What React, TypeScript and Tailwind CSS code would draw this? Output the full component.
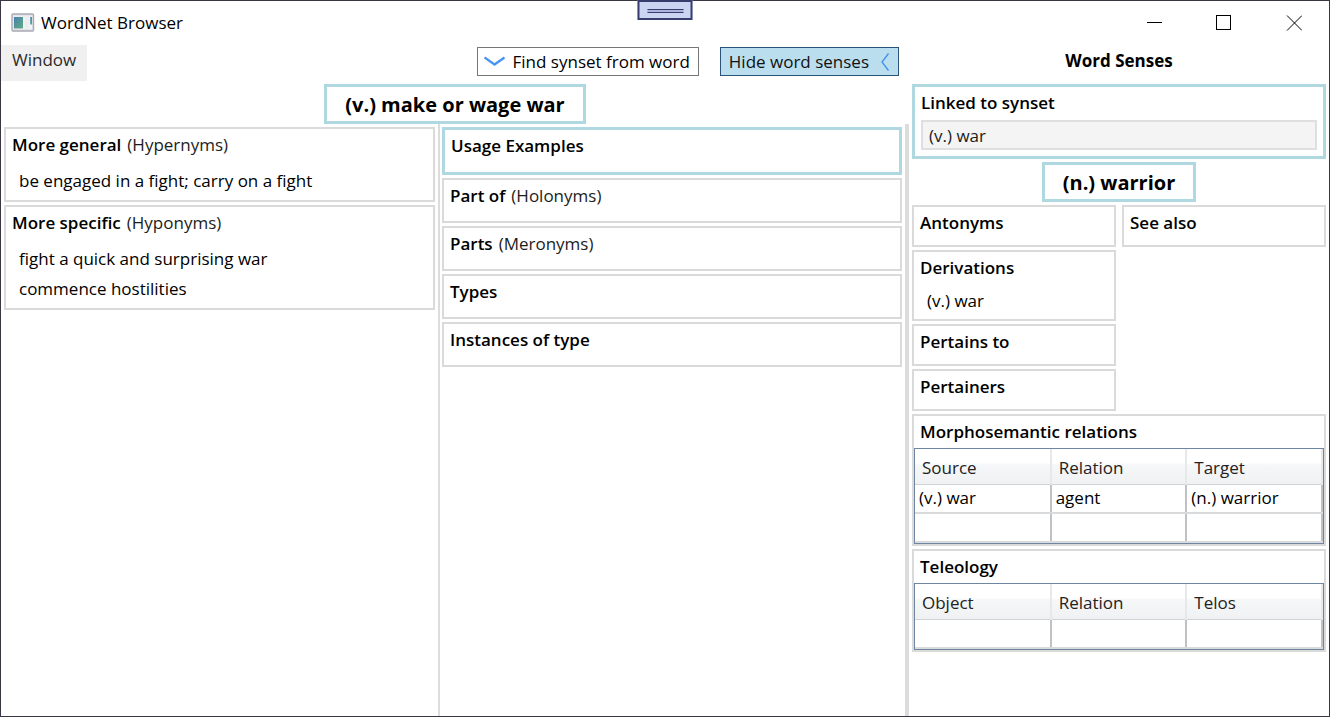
import type { ReactNode } from "react";

type CardProps = {
  title: string;
  note?: string;
  accent?: boolean;
  className?: string;
  children?: ReactNode;
};

function Card({ title, note, accent, className = "", children }: CardProps) {
  return (
    <section
      className={`${accent ? "border-3 border-[#b0d8e0]" : "border-2 border-[#dadada]"} ${className}`}
    >
      <h3 className="px-1.5 leading-8 font-semibold whitespace-nowrap">
        {title}
        {note && <span className="ml-1.5 font-normal text-[#1c1c1c]">({note})</span>}
      </h3>
      {children}
    </section>
  );
}

function Items({ items, className = "" }: { items: string[]; className?: string }) {
  return (
    <ul className={`px-[13px] leading-[30px] ${className}`}>
      {items.map((item) => (
        <li key={item}>{item}</li>
      ))}
    </ul>
  );
}

function Heading({ children }: { children: ReactNode }) {
  return (
    <h2 className="flex h-10 items-center self-center border-3 border-[#b0d8e0] px-[18px] pt-0.5 text-[20px] font-bold whitespace-nowrap">
      {children}
    </h2>
  );
}

function RelationTable({ label, columns, rows }: { label: string; columns: string[]; rows: string[][] }) {
  return (
    <div className="border border-[#6f86a3]">
      <table aria-label={label} className="w-full table-fixed border-collapse">
        <thead>
          <tr className="h-[35px] bg-linear-to-b from-white from-40% via-[#f6f7f8] via-45% to-[#f0f1f3]">
            {columns.map((column) => (
              <th
                key={column}
                className="border-r-2 border-b border-r-[#e6e8ea] border-b-[#d0d3d6] px-[7px] pt-1 text-left font-normal text-[#222]"
              >
                {column}
              </th>
            ))}
          </tr>
        </thead>
        <tbody>
          {rows.map((row, index) => (
            <tr key={index} className="h-[29px]">
              {row.map((cell, cellIndex) => (
                <td
                  key={cellIndex}
                  className="border-r-2 border-b-2 border-r-[#bfc2c4] border-b-[#d8dadb] px-1 leading-[26px]"
                >
                  {cell}
                </td>
              ))}
            </tr>
          ))}
        </tbody>
      </table>
    </div>
  );
}

function AppIcon() {
  return (
    <svg width="24" height="20" viewBox="0 0 24 20" aria-hidden="true">
      <defs>
        <linearGradient id="pane" x1="0" y1="0" x2="1" y2="1">
          <stop offset="0" stopColor="#4a80b0" />
          <stop offset="1" stopColor="#5fae80" />
        </linearGradient>
      </defs>
      <rect x="1" y="1" width="21.500" height="17" rx="1" fill="#e4e5ea" stroke="#a9abb2" strokeWidth="1.400" />
      <rect x="3" y="3.500" width="18" height="12.500" fill="#f3f4f7" />
      <rect x="3" y="4" width="9" height="11.500" fill="url(#pane)" />
      <rect x="13.500" y="4" width="4.500" height="11.500" fill="#ecedf1" />
      <rect x="19.200" y="4" width="1.800" height="7.500" fill="url(#pane)" />
    </svg>
  );
}

const windowButton = "flex h-11 w-[70px] items-center justify-center";

export default function App() {
  return (
    <div className="relative flex min-h-screen flex-col border border-[#3b3646] bg-white font-['Open_Sans','Noto_Sans',sans-serif] text-[17px] leading-6 text-black">
      <div className="absolute -top-px left-1/2 flex h-5 w-[55px] -translate-x-1/2 items-center justify-center border-2 border-[#373e6d] bg-[#cbd5f1] pt-0.5">
        <div className="h-1 w-9 border-y border-[#373e6d] bg-[#aab6dc]" />
      </div>

      <header className="flex h-11 items-center justify-between">
        <div className="flex items-center gap-1.5 pl-2.5">
          <AppIcon />
          <h1>WordNet Browser</h1>
        </div>
        <div className="flex">
          <button aria-label="Minimize" className={windowButton}>
            <svg width="16" height="16" viewBox="0 0 16 16" stroke="#000" fill="none">
              <path d="M1 7.500h15" />
            </svg>
          </button>
          <button aria-label="Maximize" className={windowButton}>
            <svg width="16" height="16" viewBox="0 0 16 16" stroke="#000" fill="none">
              <rect x="0.500" y="0.500" width="14" height="14" />
            </svg>
          </button>
          <button aria-label="Close" className={windowButton}>
            <svg width="16" height="16" viewBox="0 0 16 16" stroke="#000" fill="none">
              <path d="M1 0.500l15 15M16 0.500l-15 15" />
            </svg>
          </button>
        </div>
      </header>

      <div className="grid grow grid-cols-[908fr_420fr]">
        <main className="flex flex-col">
          <div className="flex h-[39px] items-start justify-between pr-[10px]">
            <nav>
              <button className="h-9 bg-[#f0f0f0] px-[11px] pb-1.5 text-[#2b2b2b]">Window</button>
            </nav>
            <div className="flex gap-[21px] pt-0.5">
              <button className="flex h-[29px] items-center gap-[7px] border border-[#767676] pr-2 pl-1.5 whitespace-nowrap">
                <svg className="shrink-0" width="22" height="12" viewBox="0 0 22 12" fill="none" stroke="#4a95f2" strokeWidth="2.400" aria-hidden="true">
                  <path d="M0.500 1.500l10 7 10-7" />
                </svg>
                Find synset from word
              </button>
              <button className="flex h-[29px] items-center gap-3 border border-[#2c5378] bg-[#bbdeee] px-2 whitespace-nowrap text-[#111]">
                Hide word senses
                <svg className="shrink-0" width="9" height="18" viewBox="0 0 9 18" fill="none" stroke="#4190f0" strokeWidth="1.300" aria-hidden="true">
                  <path d="M7.500 0.500L1 9l6.500 8.500" />
                </svg>
              </button>
            </div>
          </div>

          <Heading>(v.) make or wage war</Heading>

          <div className="grid grow grid-cols-[439fr_469fr]">
            <div className="flex flex-col gap-[3px] border-r-2 border-[#dcdcdc] px-[3px] pt-[3px]">
              <Card title="More general" note="Hypernyms">
                <Items items={["be engaged in a fight; carry on a fight"]} className="mt-[5px] pb-1" />
              </Card>
              <Card title="More specific" note="Hyponyms">
                <Items items={["fight a quick and surprising war", "commence hostilities"]} className="mt-[5px] pb-1" />
              </Card>
            </div>
            <div className="flex flex-col gap-[3px] border-r-4 border-[#dcdcdc] pt-[3px] pr-[3px] pl-0.5">
              <Card title="Usage Examples" accent className="min-h-12" />
              <Card title="Part of" note="Holonyms" className="min-h-[45px]" />
              <Card title="Parts" note="Meronyms" className="min-h-[45px]" />
              <Card title="Types" className="min-h-[45px]" />
              <Card title="Instances of type" className="min-h-[45px]" />
            </div>
          </div>
        </main>

        <aside className="flex flex-col gap-[3px] px-[3px]">
          <h2 className="h-9 text-center leading-8 font-bold">Word Senses</h2>
          <Card title="Linked to synset" accent className="h-[75px]">
            <input
              aria-label="Linked to synset"
              readOnly
              defaultValue="(v.) war"
              className="mx-1.5 mt-px block h-[30px] w-[calc(100%-12px)] border-2 border-[#dfdfdf] bg-[#f4f4f4] px-1.5 text-[#1c1c1c] outline-none"
            />
          </Card>
          <Heading>(n.) warrior</Heading>
          <div className="grid grid-cols-2 gap-x-1.5 gap-y-[3px]">
            <Card title="Antonyms" className="min-h-[42px]" />
            <Card title="See also" className="min-h-[42px]" />
            <Card title="Derivations" className="col-start-1">
              <Items items={["(v.) war"]} className="mt-0.5 pb-[3px]" />
            </Card>
            <Card title="Pertains to" className="col-start-1 min-h-[42px]" />
            <Card title="Pertainers" className="col-start-1 min-h-[42px]" />
          </div>
          <Card title="Morphosemantic relations">
            <RelationTable
              label="Morphosemantic relations"
              columns={["Source", "Relation", "Target"]}
              rows={[
                ["(v.) war", "agent", "(n.) warrior"],
                ["", "", ""],
              ]}
            />
          </Card>
          <Card title="Teleology">
            <RelationTable label="Teleology" columns={["Object", "Relation", "Telos"]} rows={[["", "", ""]]} />
          </Card>
        </aside>
      </div>
    </div>
  );
}
